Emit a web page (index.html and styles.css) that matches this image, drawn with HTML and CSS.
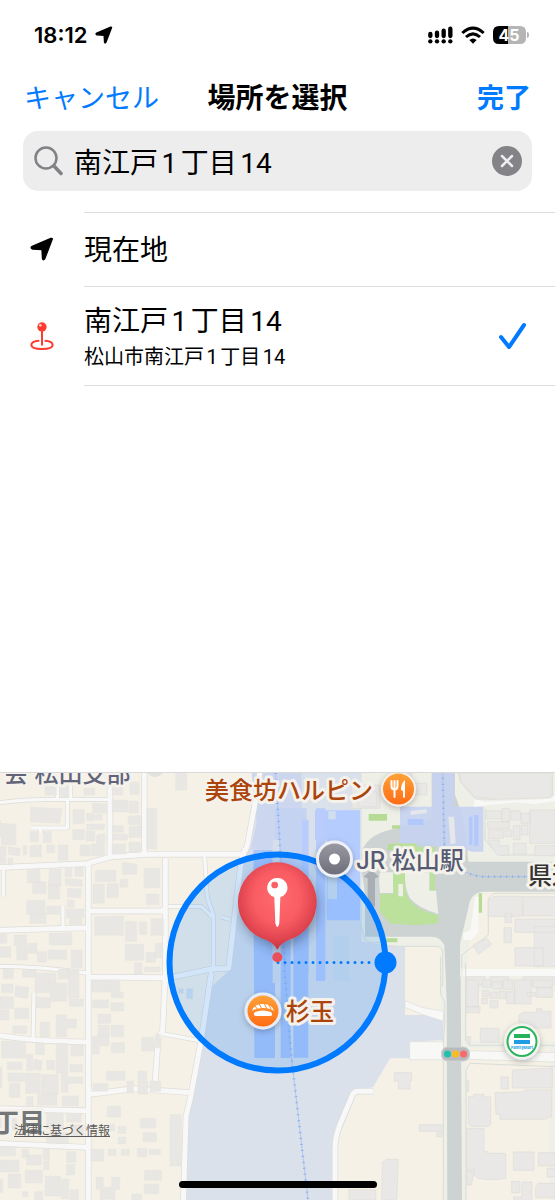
FILE: index.html
```html
<!DOCTYPE html>
<html lang="ja">
<head>
  <meta charset="UTF-8">
  <meta name="viewport" content="width=device-width, initial-scale=1.0">
  <title>場所を選択</title>
  <link rel="stylesheet" href="styles.css">
</head>
<body>
  <div class="status-bar">
    <span class="time">18:12</span>
    <svg class="arrow" width="18" height="18" viewBox="0 0 24 24"><path d="M22 2 14.500 21.500Q13.300 23.500 12.800 21.500L12.300 12.200 2.500 11.700Q.500 10.800 2.300 9.600L21 1.600Z" stroke="#000" stroke-width="2" stroke-linejoin="round"/></svg>
    <div class="status-icons">
      <svg width="25" height="18" viewBox="0 0 75 54">
        <path d="M7 24v6M27 20v10M47 14v16M67 8v22" stroke="#000" stroke-width="13" stroke-linecap="round"/>
        <circle cx="7" cy="46" r="6.500"/><circle cx="27" cy="46" r="6.500"/><circle cx="47" cy="46" r="6.500"/><circle cx="67" cy="46" r="6.500"/>
      </svg>
      <svg width="24" height="18" viewBox="0 0 72 54" fill="none" stroke="#000" stroke-width="9">
        <path d="M4 21Q36-8 68 21M15 33Q36 14 57 33"/>
        <path d="M25 42Q36 33 47 42L36 53Z" fill="#000" stroke="none"/>
      </svg>
      <svg width="36" height="20" viewBox="0 0 36 20">
        <path d="M15 1H6Q0 1 0 7v6q0 6 6 6h9z"/>
        <path d="M15 1h12q6 0 6 6v6q0 6-6 6H15zM34 7q2 0 2 3t-2 3z" fill="#b5b5b5"/>
        <text class="battery-text" x="16" y="16" text-anchor="middle">45</text>
      </svg>
    </div>
  </div>

  <header class="nav">
    <button class="nav-btn" type="button">キャンセル</button>
    <h1>場所を選択</h1>
    <button class="nav-btn done" type="button">完了</button>
  </header>

  <div class="search">
    <svg width="30" height="30" viewBox="0 0 30 30" fill="none" stroke="#828286" stroke-linecap="round"><circle cx="13" cy="12" r="10.500" stroke-width="2.500"/><path d="M21 20l7 7.500" stroke-width="3.500"/></svg>
    <input type="text" value="南江戸1丁目14" aria-label="場所を検索">
    <button class="clear" type="button" aria-label="消去">
      <svg width="30" height="30" viewBox="0 0 30 30"><circle cx="15" cy="15" r="15" fill="#838388"/><path d="M10 10l10 10M20 10L10 20" stroke="#eee" stroke-width="2.500" stroke-linecap="round"/></svg>
    </button>
  </div>

  <ul class="places">
    <li>
      <button class="place" type="button">
        <span class="place-icon"><svg width="24" height="24" viewBox="0 0 24 24"><path d="M22 2 14.500 21.500Q13.300 23.500 12.800 21.500L12.300 12.200 2.500 11.700Q.500 10.800 2.300 9.600L21 1.600Z" stroke="#000" stroke-width="2" stroke-linejoin="round"/></svg></span>
        <span class="place-body"><span class="place-name">現在地</span></span>
      </button>
    </li>
    <li>
      <button class="place" type="button">
        <span class="place-icon"><svg width="24" height="28" viewBox="0 0 72 84" fill="none" stroke="#ff3b30"><path d="M28 56C12 57 4 63 4 69c0 8 15 12 32 12s32-4 32-12c0-6-8-12-24-13" stroke-width="6"/><path d="M36 24v44" stroke-width="6" stroke-linecap="round"/><circle cx="36" cy="15" r="14" fill="#ff3b30" stroke="none"/><circle cx="31" cy="10" r="4" fill="#ffc6c3" stroke="none"/></svg></span>
        <span class="place-body">
          <span class="place-name">南江戸1丁目14</span>
          <span class="place-address">松山市南江戸1丁目14</span>
        </span>
        <svg class="check" width="28" height="28" viewBox="0 0 28 28" fill="none" stroke="#007aff" stroke-width="4" stroke-linecap="round" stroke-linejoin="round"><path d="M3 15l8 10L26 3"/></svg>
      </button>
    </li>
  </ul>

  <main class="map">
    <svg class="map-canvas" viewBox="0 0 555 427">
      <defs>
        <radialGradient id="balloon" cx=".5" cy=".4" r=".6"><stop offset="0" stop-color="#ff6a6f"/><stop offset=".5" stop-color="#f95c63"/><stop offset=".8" stop-color="#e0454f"/><stop offset="1" stop-color="#c92f3c"/></radialGradient>
        <linearGradient id="orange" x2="0" y2="1"><stop stop-color="#ffa43b"/><stop offset="1" stop-color="#ff6a13"/></linearGradient>
        <linearGradient id="grey" x2="0" y2="1"><stop stop-color="#9b9ba5"/><stop offset="1" stop-color="#6c6c79"/></linearGradient>
        <filter id="shadow" x="-40%" y="-40%" width="180%" height="180%"><feDropShadow dx="0" dy="2" stdDeviation="3" flood-opacity=".25"/></filter>
        <filter id="pin-shadow" x="-40%" y="-40%" width="180%" height="180%"><feDropShadow dx="6" dy="16" stdDeviation="16" flood-color="#234" flood-opacity=".4"/></filter>

        <g id="roads">
          <g transform="translate(0 -24)">
            <path d="M-10 308L260 296 330 276 440 268H725Q740 260 745 225L766 110 780 20M265 290V1320M330 20V276M433 20V268M496 280V660M270 438H480Q496 438 496 425M-10 496L262 488M270 636L496 638M735 250L722 300 686 610 634 612 500 640"/>
          </g>
          <g transform="translate(0 621)">
            <path d="M496-20L488 150 474 180 465 315M634-20L602 190 572 350 558 410 550 670M-10 166Q120 186 260 186M270 343L400 326 575 338M-10 386L260 392M-10 490L260 502"/>
          </g>
          <path d="M1120 955h-45q-13 0-18 12l-38 90q-14 35-14 75v160"/>
        </g>
        <g id="lanes">
          <path transform="translate(0 -24)" d="M-10 114Q80 102 180 103H325M172 24V103M212 24V103M202 104V189H92M122 189V204M10 314V394M189 422V489M614 276L622 400 640 450V610M505 425H605L640 459M665 456L690 464M-10 604Q120 604 260 624M634 614L622 684"/>
          <path d="M102 660L99 800M490 783L595 802"/>
        </g>
      </defs>

      <!-- ground shapes are drawn at three units per map unit -->
      <g transform="scale(.33333)">
        <rect width="1665" height="1281" fill="#f5f1e6"/>
        <path d="M1080 0h585v1281H1320V520H1080z" fill="#eeefe7"/>
        <path d="M1214 520h108v210h-108zM1120 941l50-85h160v425h-330v-150zM1400 826h250v455h-250zM1400 656h265v150h-265zM1420 385l45-35h200v240h-265z" fill="#f5f1e6"/>
        <path class="yard" d="M778 0L755 110 730 250 690 590 636 640 600 811 560 1035 550 1281H1005V1120L1070 960 1120 941 1170 856H1230V806L1330 801V726H1215V521L1085 506V0Z"/>
        <path d="M755 0h150v230H752l18-80z" fill="#ccd7ef"/>
        <path d="M825 106h95v300h-95z" fill="#c5d3f3"/>
        <path d="M945 112h135v60l-10 270H980V200h-35zM982 114h98v328h-98z" fill="#b5ccff"/>
        <path d="M948 106h28v518h-28zM906 140h20v460h-20z" fill="#b9ccfc"/>
        <path d="M760 231h65v624h-62zM842 430h30v425h-30zM880 430h45v424h-45z" fill="#adc7fa"/>
        <path d="M818 200h20v430h-20z" fill="#d6dfe9"/>
        <path d="M983 310h28v68h-28zM1002 488h45v138h-45zM985 115h22v24h-22z" fill="#d3deec"/>
        <path d="M827 0l20 340 7 260 20 250 50 431" class="rail"/>
        <path d="M827 0l20 340 7 260 20 250 50 431" class="rail-ties"/>
      </g>

      <g transform="scale(.33333) translate(825 -24)">
        <path class="plaza" d="M260 260Q280 202 370 190L470 160V20H540V90Q570 160 580 290L640 290H850V380H620Q585 385 580 430L555 535V700H515L508 540Q495 515 470 515H270V390L260 315Z"/>
        <path d="M315 387H355V235H480V378H465V322H390V360Q390 430 490 450V475Q420 485 345 475L315 440Z" fill="#bce19c"/>
        <path d="M390 322h73v55h20l7 70Q430 430 405 400 388 370 390 322zM315 322h39v62h-39q-5-45 0-62zM370 357h14v37h-14z" fill="#eeefe7"/>
        <path d="M281 147h55v20h-55zM351 181h35v10h-35zM338 238h40v18h-40zM333 520h34v12h-34zM611 385h10v58h-10z" fill="#b6db95"/>
        <path class="station" d="M375 125H625V260H590L545 245H425V235H375zM472 24h65v220h-65z"/>
        <path d="M398 162h47v18h-47zM582 155h10v85h-10zM598 150h12v92h-12z" fill="#b0c8fb"/>
        <path d="M520 155h17l5 80-15 3zM407 138l48-5v11l-48 6z" fill="#e6e7eb"/>
        <path d="M254 470l16 55 15 7h40l8 12h150q20 0 20 20v100" class="kerb"/>
        <path d="M503 20l5 220q20 80 110 95h230" class="rail"/>
        <path d="M503 20l5 220q20 80 110 95h230" class="rail-ties"/>
        <path d="M278 425V340l-12-5 22-20 24 20-12 5v85z" fill="#a9aeb5"/>
        <path class="white" d="M595 125L720 112 780 117 845 108V90l-25 12-190 8-30-8zM565 612h285v22H565zM600 395h10v105l-20 25h-25v-20l22-10z"/>
        <path class="kerb" d="M560 610V570L640 510V400l15-15h200M630 130v95l40 45h190M550 24l7 28 45 50h55l65-10h110V24"/>
      </g>

      <g transform="scale(.33333) translate(825 621)">
        <path d="M515-10h42l4 680h-44z" fill="#ccd3d2"/>
        <path class="kerb" d="M497-70V45l12 20v70l-4 45v490M572-50V180l12 16h260M840 260l-255-10-12 20v400"/>
        <path class="white outline" d="M390 62l50 20 65 12v30l-60-20-55-22zM404 185h101v54H404zM582 212l258 6v28l-258-8z"/>
      </g>

      <g transform="scale(.33333)">
        <use href="#lanes" class="lane-casing"/>
        <use href="#roads" class="road-casing"/>
        <use href="#lanes" class="lane-fill"/>
        <use href="#roads" class="road-fill"/>
      </g>

      <g class="buildings" transform="scale(.33333) translate(0 -24)">
        <path d="M92 127l95 4-8 44-87-4zM5 175l42 3v62H5zM0 245h18v50H0zM25 245l35 5v22l-35-3zM-2 168h5v48h-5zM70 242h10v27H70zM24 280h14v20H24zM90 200h25v30H90zM130 200h24v33h-24zM90 242l34-3v36H90zM140 240h24v23h-24zM175 240h29v46h-29zM219 134h34v40l-34 4zM260 145h22v22h-22zM278 114l42 4v26h-42zM286 149h20v16h-20zM260 178h55l-5 16h-50zM218 194h35v30h-35zM258 198h26v30h-26zM240 240h30v33h-30zM290 210l24-4v66h-40v-35h16z"/>
        <path d="M135 55h34v35h-34zM182 55h24v40h-24zM252 70h32v20h-32zM336 60h32v30h-32zM336 105h48v36h-48zM390 52h27v36h-27zM387 108h28v36h-28zM385 154l36-3v28h-36zM338 182h32v20h-32zM338 207h44v18h-44zM387 186l36-3v34h-36zM336 237h40v30h-40zM387 232h34v30h-34zM440 130h30v122h-30zM527 20h33v55h-33z"/>
        <path d="M82 313h38v40H82zM98 350h40v36H98zM148 312h35v50h-38zM195 306h20v30h-20zM225 306h24v28h-24zM196 340l50 5v20l-50-4zM203 370l42 2-3 26-40-2zM145 360h34v42h-34zM80 406h55v42H80zM90 445h48v30H90zM140 424h40v24h-40zM202 405h20v22h-20zM200 432h52v26h-52zM208 460h37v18h-37zM148 505l67-2v37h-67zM0 507h20v28H0zM42 510h38v32H42zM0 545h32v32H0zM50 545h32v40H50zM85 535h26v30H85zM112 560h28v32h-28zM145 555h55v28h-55zM214 555h33v54h-33zM10 613h30v28H10zM68 615h40v22H68zM130 625h38v36h-38zM175 612h34v30h-34z"/>
        <path d="M286 316h62v34h-62zM367 292l43 6v30h-43zM432 310h47v58h-47zM279 358h34v57h-34zM321 356h34v42h-34zM360 343h23v24h-23zM439 388h38v31h-38zM284 455l86-2v58h-86zM376 468l34 3v58h-34zM418 471h22v37h-22zM453 461h38v50h-38zM376 538h55v48h-55zM438 562h28v30h-28zM466 535h22v43h-22zM404 593h22v34h-22zM434 606h46v14h-46zM276 645h83v35h-83z"/>
      </g>
      <g class="buildings" transform="scale(.33333) translate(0 621)">
        <path d="M0 50h40v36H0zM5 12h34v26H5zM46 17l40 5-3 33-38-5zM0 90h27v30H0zM44 84h42v32H44zM105-20h42v58h-42zM150 10h50v54h-50zM205-30h32v84h-32zM107 50l44 4v30h-44zM168 105h32v66h-32zM208 57h42v22h-42zM120 127h29v43h-29zM203 117h26v27h-26zM38 138h42v22H38zM5 184h72v50H5zM107 190h26v34h-26zM80 222h18v50H80zM169 190h34v90h-34zM213 196l37-3v35h-37zM103 238l24 4-4 30-23-5zM140 241h24v28h-24zM22 247h44v22H22zM24 279h50v25H24zM77 280h44v60H77zM125 284h50v58h-50zM184 282h20v55h-20zM210 254h38v22h-38zM206 292h42v18h-42zM0 262h6v60H0zM28 310h32v42H28zM79 350h20v30H79zM113 343h58v32h-58zM187 348h48v30h-48zM0 404h50v46H0zM140 400h50v46h-50zM200 400h44v26h-44zM214 435h36v35h-36zM140 458h65v32h-65z"/>
        <path d="M278 3h52v32h-52zM334 37h36v16h-36zM278 60h48v24h-48zM333 68h38v25h-38zM294 103h38v27h-38zM294 136h34v32h-34zM333 136h38v34h-38zM277 169h50v28h-29v24h-21zM334 188h39v30h-39zM425 172h36v41h-36zM467 163h15v40h-15zM319 274h56v27h-56zM414 274h26v27h-26zM280 311h43v23h-43zM381 303h19v36h-19zM414 303h29v40h-29zM450 303h32v32h-32zM322 379h40v32h-40zM421 415h46v29h-46zM429 458h40v27h-40zM510 404h34v154h-34zM354 440h24v20h-24zM354 472h24v20h-24zM330 433h14v20h-14zM273 508h38v35h-38zM324 508h24v18h-24zM364 508h24v18h-24zM412 505h28v26h-28zM447 508h34v16h-34zM433 571h22v30h-22zM458 571h27v30h-27zM433 613h43v28h-43zM288 592h22v30h25v-30h24v36h-14v30h-45v-30h-12zM395 642h30v20h-30z"/>
        <path d="M0 500h46v27H0zM66 508h20v24H66zM80 525h44v30H80zM130 505h18v34h-18zM200 515h27v32h-27zM0 540h57v36H0zM131 543h16v26h-16zM200 553h24v32h-24zM76 571h51v38H76zM24 582h38v42H24zM135 588h46v60h-46zM184 597h22v60h-22zM0 598h8v40H0zM68 635h16v15H68zM104 635h24v25h-24zM210 629h25v31h-25z"/>
        <path d="M535 26h15v14h-15zM560 26h18v30h-18z" class="blue-building"/>
      </g>
      <g class="buildings east" transform="scale(.33333) translate(825 -24)">
        <path d="M555 25H828V98L660 103 600 95 555 45z"/>
        <path d="M634 137h45v25h-45zM682 130h22v40h-22zM708 137h28v28h-28zM738 145h28v30h-28zM638 170h65v20h-65zM640 195h45v25h-45zM690 195h20v20h-20zM715 182h20v42h-20zM739 180h20v30h-20zM764 135h76v100h-76zM638 225l28 45h35v-28h-28v-17zM715 235h38v32h-38zM780 242h60v30h-60z"/>
        <path d="M640 405l17-11h85v60H640zM745 395h100v58H745zM690 445h20v28h-20zM687 488h22v45h-22zM720 462h120v40H720zM720 548h85v55h-85zM778 485h65v120h-65zM595 540l40-20 15 18-40 30zM575 635h55v25h-55zM645 635h55v25h-55zM745 635h100v25H745z"/>
        <path d="M230 60h85v70h-85zM250 80h55v45h-55zM365 24h45v40h-45zM405 55h50v34h-50z"/>
      </g>
      <g class="buildings east" transform="scale(.33333) translate(825 621)">
        <path d="M575 0h35v80h-35zM622 0h25v22h-25zM652 5h28v22h-28zM685 0h28v28h-28zM622 32h18v18h-18zM645 36h22v20h-22zM672 34h20v22h-20zM620 55h18v16h-18zM645 62h24v22h-24zM695 35h24v36h-24zM718 0h50v72h-50zM772 0h60v22h-60zM757 37h24v12h-24zM784 24h48v28h-48zM616 145h56v42h-56zM576 170h10v20h-10zM575 80h40v18h-40zM732 105l13-8h40V86h16v8h27v50h-96z"/>
        <path d="M358 278h52v24h-5v25h-35v-23h-12zM433 434h70v20h-70zM485 458h16v12h-16zM575 300h6v35h-6zM678 291h22v36h-22zM712 270l120-6v60H712zM580 350h15v-7h32v8h20v80l-6 8h-55l-6-8zM660 338l80-2 10-6h80v80l-20 8H675v-15h-12zM575 445h52v70h12v5h53v75q-35 8-85 0l-32-30zM715 516h62v55h-62zM790 518h50v40h-50zM816 565h25v26h-25zM575 570h24l-10 45h-14zM710 604h25v34h-25zM741 606h30v55h-55v-10h25zM782 622l8-12h50v43h-58zM322 547l12-9h36l-5 122h-45zM222 630h80v30h-80z"/>
      </g>

      <text class="label area" x="-7" y="359">丁目</text>
      <text class="label road-name" x="528" y="111">県道</text>
      <text class="label org" x="4" y="9">会 松山支部</text>
      <circle class="org-dot" cx="155" cy="-5" r="9"/>

      <circle class="radius" cx="277.500" cy="189.500" r="108"/>
      <path class="radius-line" d="M278 189.500H376"/>
      <circle cx="385.500" cy="189.500" r="11" fill="#007aff"/>

      <text class="label food" x="205" y="26">美食坊ハルピン</text>
      <text class="label station-name" x="356" y="96">JR 松山駅</text>
      <text class="label food" x="286" y="247">杉玉</text>

      <g filter="url(#shadow)">
        <circle cx="398.500" cy="16" r="16.500" fill="url(#orange)" stroke="#f4efe8" stroke-width="2"/>
        <circle cx="334.500" cy="86" r="17" fill="url(#grey)" stroke="#eef0f4" stroke-width="3"/>
        <circle cx="263" cy="238" r="17" fill="url(#orange)" stroke="#e8edf5" stroke-width="3"/>
        <circle cx="522" cy="268.500" r="18" fill="#f1f1ef"/>
      </g>
      <path d="M391.500 8v5q0 3.500 3 3.500T397.500 13V8M394.500 8v16" fill="none" stroke="#fff" stroke-width="2" stroke-linecap="round"/>
      <path d="M405 7q-4 3-4 10l2 1v6q1 2 2 0z" fill="#fff"/>
      <circle cx="334.500" cy="86" r="5.500" fill="#fff"/>
      <g transform="translate(263 238)" fill="#fff">
        <path d="M-8 1Q0-2 8 1 11 5 6 5H-6Q-11 5-8 1zM-11 0Q-9-7 0-7 9-7 11 0 7-3 0-3-7-3-11 0z"/>
        <path d="M-8-5l3 4M-4-7l3 5M1-8l3 6M6-6l2 4" stroke="#ff8a29"/>
      </g>
      <circle cx="522" cy="268.500" r="14.500" fill="#fff" stroke="#2bb45d" stroke-width="2"/>
      <path d="M514 261h16v4h-16z" fill="#27b35b"/><path d="M514 267h16v4h-16z" fill="#209de3"/>
      <text class="brand" x="522" y="276" text-anchor="middle">FamilyMart</text>
      <rect x="441.500" y="274" width="28" height="14" rx="6" fill="#b9babd" stroke="#d1d3d4"/>
      <circle cx="447.500" cy="281" r="3.500" fill="#20c1ad"/><circle cx="455.500" cy="281" r="3.500" fill="#fbbd1c"/><circle cx="463.500" cy="281" r="3.500" fill="#fb6a6b"/>

      <g transform="scale(.33333) translate(660 231)">
        <path d="M172 37a119 119 0 0 1 49 227q-39 12-49 35-10-23-49-35a119 119 0 0 1 49-227z" fill="url(#balloon)" filter="url(#pin-shadow)"/>
        <path d="M172 84a29 29 0 0 1 9 57l-3 78q-6 24-12 0l-3-78a29 29 0 0 1 9-57z" fill="#fff"/>
        <circle cx="164" cy="105" r="10" fill="#f95f65"/>
        <circle cx="172" cy="322" r="15" fill="#e9505a"/>
      </g>
    </svg>
    <a class="legal" href="#">法律に基づく情報</a>
    <div class="home-indicator"></div>
  </main>
</body>
</html>
```
FILE: styles.css
```css
* {
  box-sizing: border-box;
}

body {
  margin: 0;
  min-height: 100vh;
  display: flex;
  flex-direction: column;
  background: #fff;
  color: #000;
  font-family: Inter, "Noto Sans CJK JP", sans-serif;
  text-autospace: normal;
}

button, input {
  font: inherit;
  text-autospace: inherit;
  color: inherit;
  background: none;
  border: 0;
  padding: 0;
  margin: 0;
}

button {
  cursor: pointer;
}

svg {
  display: block;
  flex: none;
}

/* status bar */
.status-bar {
  display: flex;
  align-items: center;
  height: 70px;
  padding: 0 26px 0 34px;
  gap: 8px;
}

.time {
  font-size: 22px;
  font-weight: 600;
}

.status-icons {
  display: flex;
  align-items: center;
  gap: 8px;
  margin-left: auto;
}

.battery-text {
  font-size: 16px;
  font-weight: 700;
  fill: #fff;
}

/* navigation */
.nav {
  display: grid;
  grid-template-columns: 1fr auto 1fr;
  align-items: center;
  height: 52px;
  padding: 0 24px;
}

.nav h1 {
  margin: 0;
  font-size: 28px;
  font-weight: 700;
}

.nav-btn {
  color: #007aff;
  font-size: 27px;
  justify-self: start;
}

.done {
  font-weight: 700;
  justify-self: end;
}

/* search */
.search {
  display: flex;
  align-items: center;
  gap: 11px;
  height: 60px;
  margin: 9px 23px 0;
  padding: 0 10px;
  border-radius: 15px;
  background: #ededed;
}

.search input {
  flex: 1;
  min-width: 0;
  font-size: 28px;
  outline: none;
}

.search input, .place-body {
  font-family: Roboto, "Noto Sans CJK JP", sans-serif;
}

/* results */
.places {
  list-style: none;
  margin: 21px 0 20px 0;
  padding: 0;
}

.place {
  display: flex;
  align-items: stretch;
  width: 100%;
  text-align: left;
  position: relative;
}

.place-icon {
  display: flex;
  align-items: center;
  justify-content: center;
  width: 84px;
}

.place-body {
  flex: 1;
  display: flex;
  flex-direction: column;
  justify-content: center;
  min-height: 74px;
  padding: 15px 0 13px;
  border-top: 1px solid #dedee0;
}

.places li:last-child .place-body {
  border-bottom: 1px solid #dedee0;
}

.place-name {
  font-size: 28px;
  line-height: 40px;
}

.place-address {
  font-size: 20px;
  line-height: 30px;
}

.check {
  position: absolute;
  right: 29px;
  top: 36px;
}

/* map */
.map {
  position: relative;
  margin-top: auto;
  border-top: 1px solid #d9d9d9;
}

.map-canvas {
  width: 100%;
  height: auto;
  overflow: hidden;
}

.yard {
  fill: #dae1ea;
}

.plaza {
  fill: #ccd3d2;
}

.station {
  fill: #c5d2f1;
  fill-opacity: .9;
}

.white {
  fill: #f8f8f7;
}

.outline {
  stroke: #dcdedb;
  stroke-width: 2;
}

.kerb {
  fill: none;
  stroke: #d8ddd8;
  stroke-width: 3;
}

.rail {
  fill: none;
  stroke: #9fb9ed;
  stroke-width: 2;
}

.rail-ties {
  fill: none;
  stroke: #8cb0f3;
  stroke-width: 8;
  stroke-dasharray: 3 15;
}

.road-casing, .road-fill, .lane-casing, .lane-fill {
  fill: none;
  stroke-linejoin: round;
}

.road-casing {
  stroke: #dddcd7;
  stroke-width: 19;
}

.road-fill {
  stroke: #f8f8f8;
  stroke-width: 15;
}

.lane-casing {
  stroke: #dddcd7;
  stroke-width: 14;
}

.lane-fill {
  stroke: #f8f8f8;
  stroke-width: 10;
}

.buildings {
  fill: #e9e7e4;
  stroke: #e2e0dc;
  stroke-width: 1;
}

.east {
  fill: #e9e8e6;
  stroke: #dddcd8;
  stroke-width: 2;
}

.blue-building {
  fill: #d8e3ec;
}

.radius {
  fill: #007aff;
  fill-opacity: .15;
  stroke: #007aff;
  stroke-width: 6;
}

.radius-line {
  fill: none;
  stroke: #007aff;
  stroke-width: 3;
  stroke-linecap: round;
  stroke-dasharray: 0 7;
}

.label {
  font-size: 24px;
  font-weight: 500;
  paint-order: stroke;
  stroke: #f5f2ec;
  stroke-width: 6px;
  stroke-linejoin: round;
}

.food {
  fill: #ac430b;
}

.station-name {
  fill: #565b73;
}

.road-name {
  fill: #333;
}

.org {
  fill: #626579;
}

.org-dot {
  fill: #e2e1dc;
}

.area {
  font-size: 26px;
  font-weight: 700;
  fill: #737778;
}

.brand {
  font-size: 4px;
  font-weight: 700;
  fill: #209de3;
}

.legal {
  position: absolute;
  left: 14px;
  bottom: 60px;
  font-size: 12px;
  line-height: 18px;
  color: #5b5b5b;
}

.home-indicator {
  position: absolute;
  left: 50%;
  bottom: 12px;
  width: 198px;
  height: 7px;
  margin-left: -99px;
  border-radius: 4px;
  background: #000;
}
```
